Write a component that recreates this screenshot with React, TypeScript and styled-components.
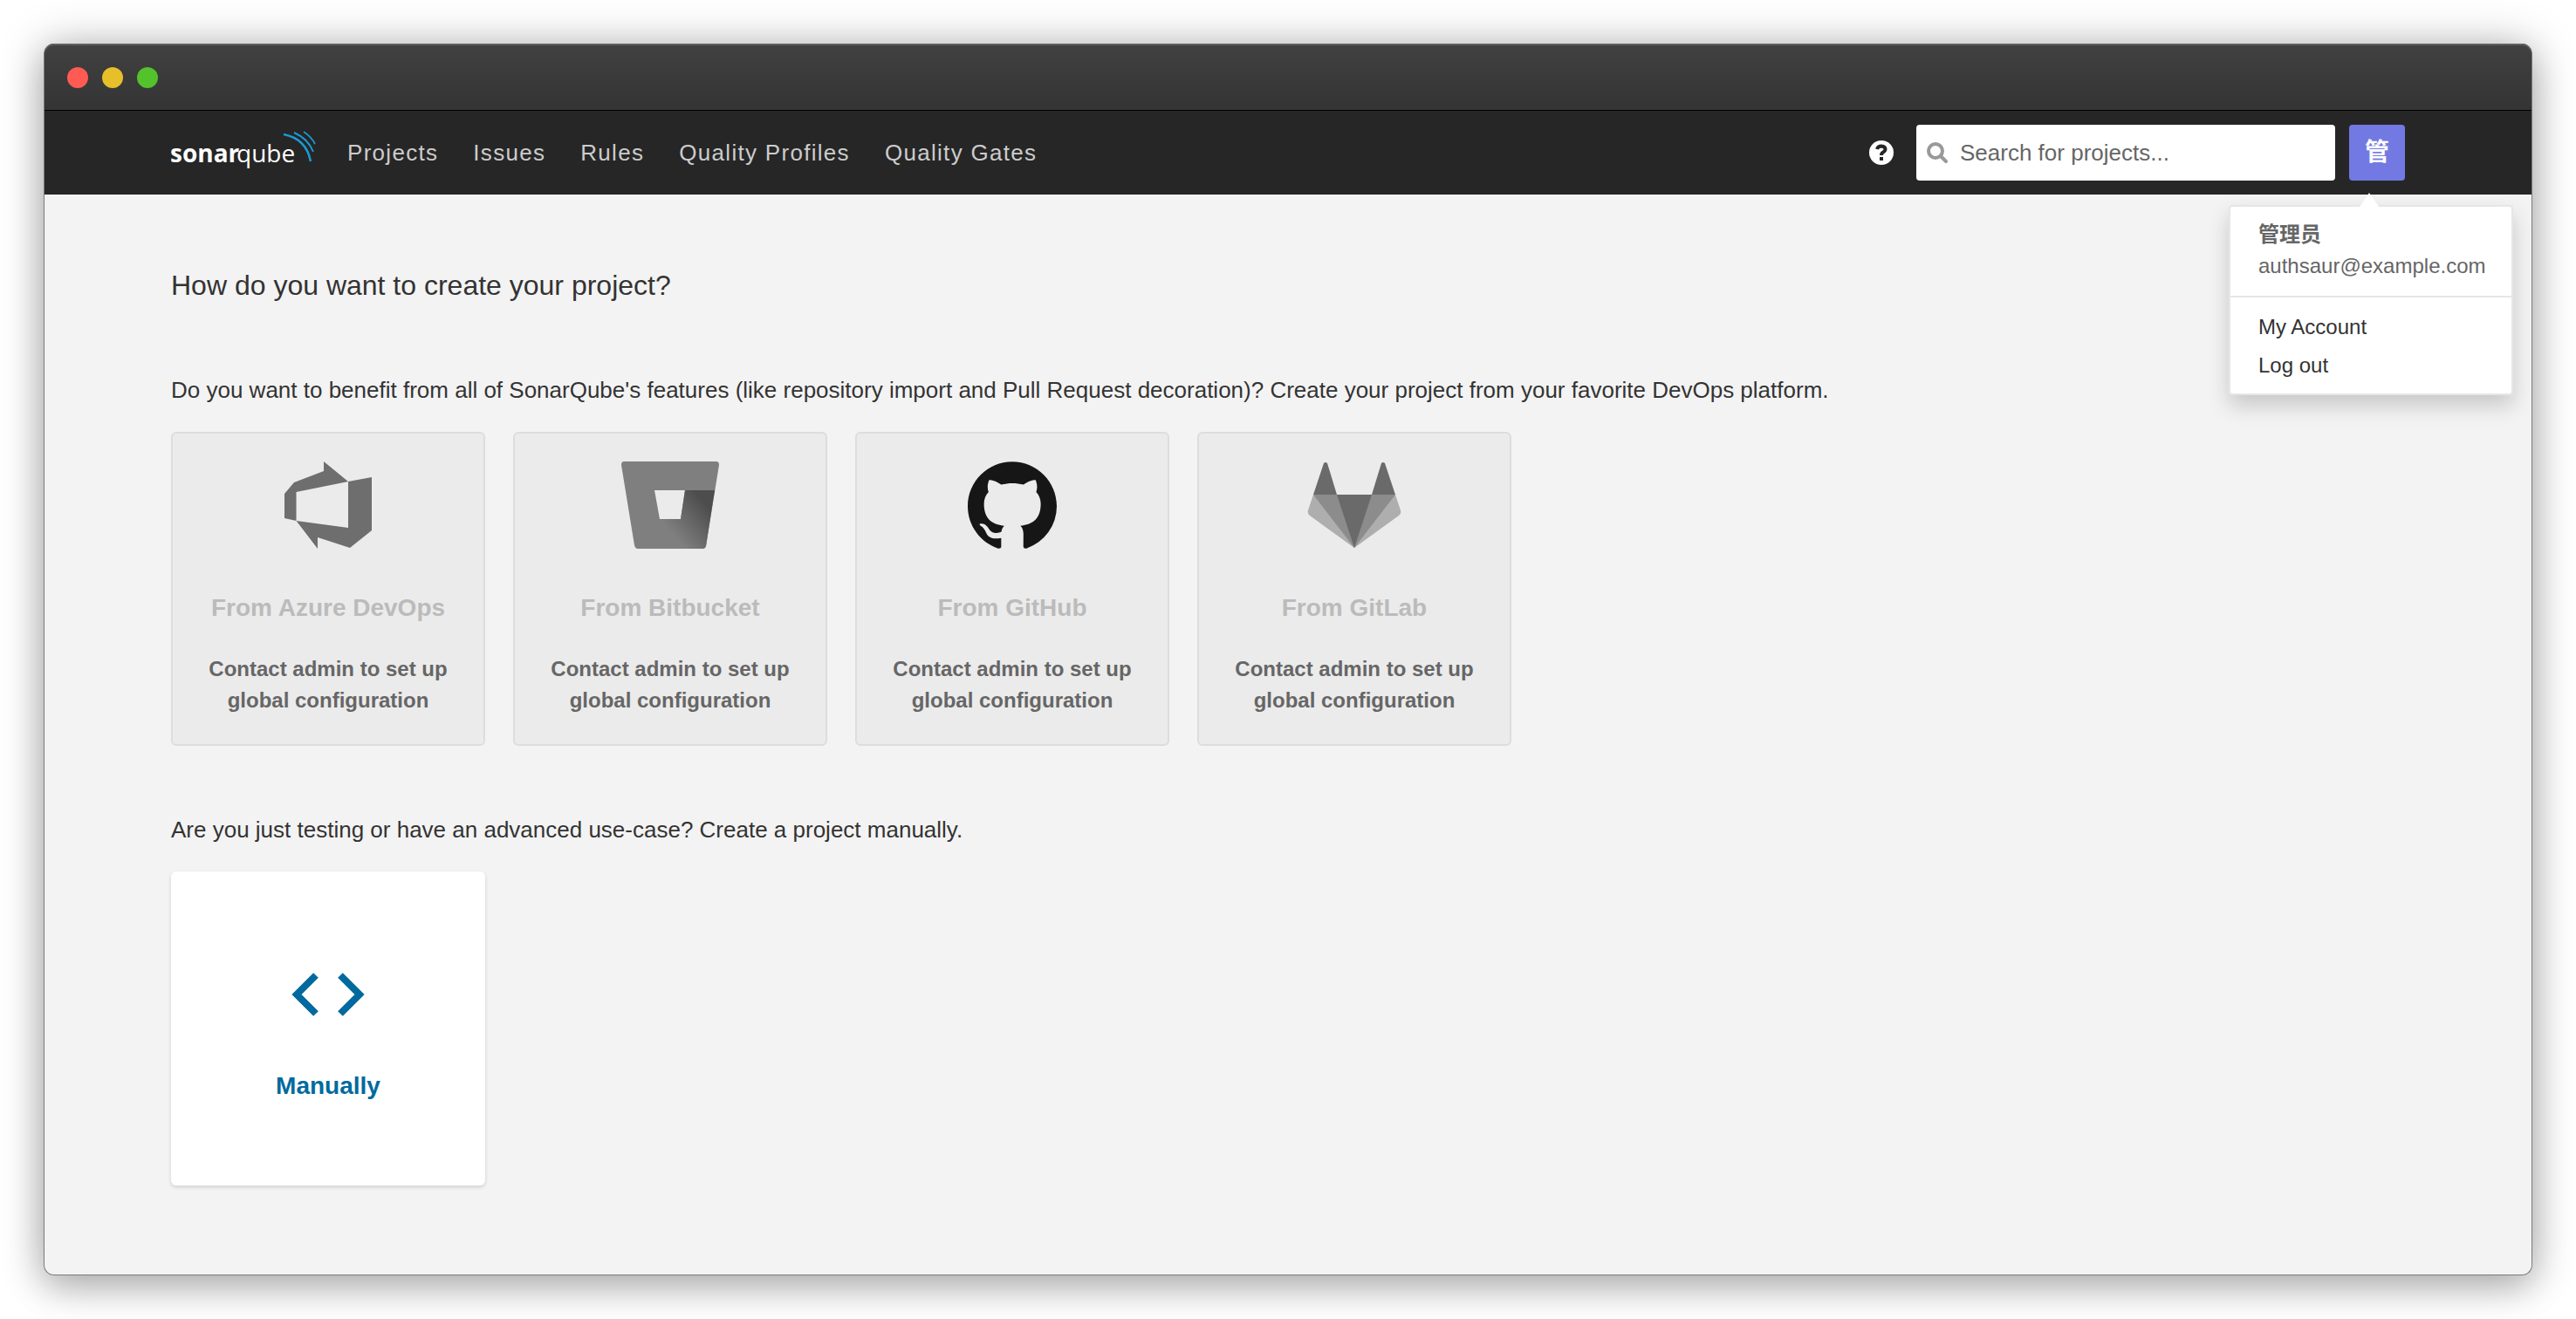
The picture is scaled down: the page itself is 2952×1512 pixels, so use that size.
import React from 'react';
import styled, { createGlobalStyle } from 'styled-components';

const GlobalStyle = createGlobalStyle`
  *, *::before, *::after { box-sizing: border-box; }
  body {
    margin: 0;
    background: #fff;
    color: #333;
    font-family: "Liberation Sans", "Noto Sans CJK SC", Arial, sans-serif;
    font-size: 26px;
    line-height: 36px;
  }
`;

const Desktop = styled.div`
  display: flex;
  min-height: 100vh;
  padding: 50px;
`;

const Window = styled.div`
  display: flex;
  flex: 1;
  flex-direction: column;
  border: 1px solid #7b7b7b;
  border-top: 0;
  border-radius: 12px;
  background: #f3f3f3;
  box-shadow: 0 0 50px rgba(0, 0, 0, 0.25), 0 16px 40px rgba(0, 0, 0, 0.2);
`;

const TitleBar = styled.div`
  display: flex;
  align-items: center;
  gap: 16px;
  height: 77px;
  padding: 2px 26px 0;
  border-bottom: 1px solid #000;
  border-radius: 11px 11px 0 0;
  background: linear-gradient(#414141, #343434);
  box-shadow: inset 0 2px 0 #5f5f5f;
`;

const Light = styled.span<{ $color: string }>`
  width: 24px;
  height: 24px;
  border-radius: 50%;
  background: ${(p) => p.$color};
`;

const Header = styled.header`
  background: #262626;
`;

const Container = styled.div`
  width: 100%;
  max-width: 2560px;
  margin: 0 auto;
`;

const HeaderRow = styled(Container)`
  display: flex;
  align-items: center;
  height: 96px;
`;

const Brand = styled.a`
  display: flex;
  margin-right: 36px;
`;

const Nav = styled.nav`
  display: flex;
  flex: 1;
  gap: 40px;
`;

const NavLink = styled.a`
  color: #ccc;
  font-size: 26px;
  letter-spacing: 0.05em;
  text-decoration: none;
`;

const HelpButton = styled.button`
  display: flex;
  margin: 0 26px 0 0;
  padding: 0;
  border: 0;
  background: none;
`;

const SearchBox = styled.label`
  display: flex;
  align-items: center;
  gap: 14px;
  width: 480px;
  height: 64px;
  margin-right: 16px;
  padding: 0 12px;
  border-radius: 4px;
  background: #fff;
`;

const SearchInput = styled.input`
  flex: 1;
  min-width: 0;
  padding: 0;
  border: 0;
  outline: 0;
  background: none;
  color: #333;
  font: inherit;
  &::placeholder { color: #666; opacity: 1; }
`;

const Account = styled.div`
  position: relative;
`;

const Avatar = styled.button`
  display: block;
  width: 64px;
  height: 64px;
  padding: 0;
  border: 0;
  border-radius: 4px;
  background: #7279e2;
  color: #fff;
  font: inherit;
  font-size: 28px;
  font-weight: 700;
`;

const Menu = styled.div`
  position: absolute;
  top: 92px;
  right: -124px;
  width: 326px;
  border: 2px solid #e6e6e6;
  border-radius: 4px;
  background: #fff;
  background-clip: padding-box;
  box-shadow: 0 12px 24px rgba(0, 0, 0, 0.18);
  font-size: 24px;
  white-space: nowrap;
`;

const Arrow = styled.svg`
  position: absolute;
  top: -18px;
  right: 152px;
`;

const Identity = styled.div`
  padding: 14px 32px 16px;
  border-bottom: 2px solid #e6e6e6;
  color: #666;
`;

const MenuList = styled.ul`
  margin: 0;
  padding: 12px 0 10px;
  list-style: none;
`;

const MenuLink = styled.a`
  display: block;
  padding: 4px 32px;
  color: #333;
  text-decoration: none;
`;

const Main = styled(Container).attrs({ as: 'main' })`
  flex: 1;
  padding: 84px 0 80px;
`;

const Title = styled.h1`
  margin: 0 0 82px;
  font-size: 32px;
  font-weight: 400;
  line-height: 40px;
`;

const Prompt = styled.p`
  margin: 0 0 30px;
`;

const Cards = styled.div`
  display: flex;
  flex-wrap: wrap;
  gap: 32px;
  margin-bottom: 78px;
`;

const Card = styled.button<{ $ready?: boolean }>`
  display: flex;
  flex-direction: column;
  align-items: center;
  justify-content: flex-start;
  width: 360px;
  height: 360px;
  padding: ${(p) => (p.$ready ? '116px 32px 32px' : '32px 30px')};
  border: ${(p) => (p.$ready ? '0' : '2px solid #ddd')};
  border-radius: 6px;
  background: ${(p) => (p.$ready ? '#fff' : '#ebebeb')};
  box-shadow: ${(p) => (p.$ready ? '0 2px 4px rgba(0, 0, 0, 0.15)' : 'none')};
  font-family: inherit;
`;

const CardName = styled.span<{ $ready?: boolean }>`
  margin-top: ${(p) => (p.$ready ? '60px' : '48px')};
  color: ${(p) => (p.$ready ? '#006a9e' : '#bbb')};
  font-size: 28px;
  font-weight: 700;
  line-height: 40px;
`;

const CardHint = styled.span`
  margin-top: 32px;
  color: #666;
  font-size: 24px;
  font-weight: 700;
  line-height: 36px;
`;

const LogoSvg = styled.svg`
  font-family: "Open Sans", "Noto Sans", sans-serif;
`;

const Logo = () => (
  <LogoSvg width="166" height="56" viewBox="0 0 166 56" role="img" aria-label="SonarQube">
    <text x="-1" y="39" fill="#fff" fontSize="28" fontWeight="700">sonar</text>
    <text x="75" y="39" fill="#fff" fontSize="28">qube</text>
    <g fill="none" stroke="#1b9ad6">
      <path d="M129 7Q155 12 160 38" strokeWidth="2.5" />
      <path d="M141 5Q157 12 163 27" strokeWidth="2" />
      <path d="M152 4Q161 10 165 18" strokeWidth="1.7" />
    </g>
  </LogoSvg>
);

const AzureIcon = () => (
  <svg width="100" height="100" viewBox="0 0 100 100" fill="#6e6e6e">
    <path d="M0 37L11 24L45 11V0L73 23L13.500 35V68L0 65ZM100 18V79L75 99L38 87V100L13.500 68L73 76V23Z" />
  </svg>
);

const BitbucketIcon = () => (
  <svg width="112" height="100" viewBox="0 0 112 100">
    <defs>
      <linearGradient id="bucket" x1="106" y1="42" x2="58" y2="82" gradientUnits="userSpaceOnUse">
        <stop offset="0.18" stopColor="#4d4d4d" />
        <stop offset="1" stopColor="#7f7f7f" />
      </linearGradient>
    </defs>
    <path fill="#7f7f7f" d="M3 0H109Q112 0 112 4L97 97Q96 100 93 100H19Q16 100 15 96L0 4Q0 0 3 0ZM38 33L44 66H68L73 33Z" />
    <path fill="url(#bucket)" d="M107 33H73L68 66H44L17 99Q18 100 20 100H93Q96 100 97 97Z" />
  </svg>
);

const GitHubIcon = () => (
  <svg width="102" height="100" viewBox="0 0 16 15.6" fill="#161616">
    <path d="M8 0C3.58 0 0 3.58 0 8c0 3.54 2.29 6.53 5.47 7.59.4.07.55-.17.55-.38 0-.19-.01-.82-.01-1.49-2.01.37-2.53-.49-2.69-.94-.09-.23-.48-.94-.82-1.13-.28-.15-.68-.52-.01-.53.63-.01 1.08.58 1.23.82.72 1.21 1.87.87 2.33.66.07-.52.28-.87.51-1.07-1.78-.2-3.64-.89-3.64-3.95 0-.87.31-1.59.82-2.15-.08-.2-.36-1.02.08-2.12 0 0 .67-.21 2.2.82.64-.18 1.32-.27 2-.27s1.36.09 2 .27c1.53-1.04 2.2-.82 2.2-.82.44 1.1.16 1.92.08 2.12.51.56.82 1.27.82 2.15 0 3.07-1.87 3.75-3.65 3.95.29.25.54.73.54 1.48 0 1.07-.01 1.93-.01 2.2 0 .21.15.46.55.38A8.01 8.01 0 0 0 16 8c0-4.42-3.58-8-8-8" />
  </svg>
);

const GitLabIcon = () => (
  <svg width="108" height="100" viewBox="0 0 108 100">
    <path fill="#aeaeae" d="M7 38L1 56Q0 60 3 62L54 99L105 62Q108 60 107 56L101 38Z" />
    <path fill="#8c8c8c" d="M7 38H101L54 99Z" />
    <path fill="#6a6a6a" d="M34 38H74L54 99ZM7 38L19 2Q21 0 23 2L34 38ZM101 38L89 2Q87 0 85 2L74 38Z" />
  </svg>
);

const CodeIcon = () => (
  <svg width="84" height="50" viewBox="0 0 84 50" fill="none" stroke="#006a9e" strokeWidth="8">
    <path d="M28 3L6 25L28 47M56 3L78 25L56 47" />
  </svg>
);

const platforms = [
  { name: 'From Azure DevOps', Icon: AzureIcon },
  { name: 'From Bitbucket', Icon: BitbucketIcon },
  { name: 'From GitHub', Icon: GitHubIcon },
  { name: 'From GitLab', Icon: GitLabIcon },
];

const links = ['Projects', 'Issues', 'Rules', 'Quality Profiles', 'Quality Gates'];

export default function App() {
  return (
    <Desktop>
      <GlobalStyle />
      <Window>
        <TitleBar>
          <Light $color="#ff5b53" />
          <Light $color="#e6bf2a" />
          <Light $color="#53c22b" />
        </TitleBar>
        <Header>
          <HeaderRow>
            <Brand href="#"><Logo /></Brand>
            <Nav>
              {links.map((l) => <NavLink key={l} href="#">{l}</NavLink>)}
            </Nav>
            <HelpButton aria-label="Help">
              <svg width="28" height="28" viewBox="1 1 28 28">
                <circle cx="15" cy="15" r="14" fill="#fff" />
                <path d="M10 11Q11 7.500 15 7.500Q19.500 8 19.500 11Q19.500 13 17 14.500Q15 15.500 15 18" fill="none" stroke="#262626" strokeWidth="4" />
                <rect x="13" y="20" width="4" height="4" fill="#262626" />
              </svg>
            </HelpButton>
            <SearchBox>
              <svg width="24" height="24" viewBox="0 0 24 24" fill="none" stroke="#999" strokeWidth="4">
                <circle cx="10" cy="10" r="8" />
                <path d="M16 16L22 22" strokeLinecap="round" />
              </svg>
              <SearchInput type="search" aria-label="Search for projects" placeholder="Search for projects..." />
            </SearchBox>
            <Account>
              <Avatar>管</Avatar>
              <Menu>
                <Arrow width="22" height="18" viewBox="0 0 22 18">
                  <path d="M0 18L11 2L22 18Z" fill="#fff" />
                </Arrow>
                <Identity>
                  <strong>管理员</strong>
                  <div>authsaur@example.com</div>
                </Identity>
                <MenuList>
                  <li><MenuLink href="#">My Account</MenuLink></li>
                  <li><MenuLink href="#">Log out</MenuLink></li>
                </MenuList>
              </Menu>
            </Account>
          </HeaderRow>
        </Header>
        <Main>
          <Title>How do you want to create your project?</Title>
          <Prompt>
            Do you want to benefit from all of SonarQube's features (like repository import and Pull Request
            decoration)? Create your project from your favorite DevOps platform.
          </Prompt>
          <Cards>
            {platforms.map(({ name, Icon }) => (
              <Card key={name} disabled>
                <Icon />
                <CardName>{name}</CardName>
                <CardHint>Contact admin to set up global configuration</CardHint>
              </Card>
            ))}
          </Cards>
          <Prompt>Are you just testing or have an advanced use-case? Create a project manually.</Prompt>
          <Card $ready>
            <CodeIcon />
            <CardName $ready>Manually</CardName>
          </Card>
        </Main>
      </Window>
    </Desktop>
  );
}
